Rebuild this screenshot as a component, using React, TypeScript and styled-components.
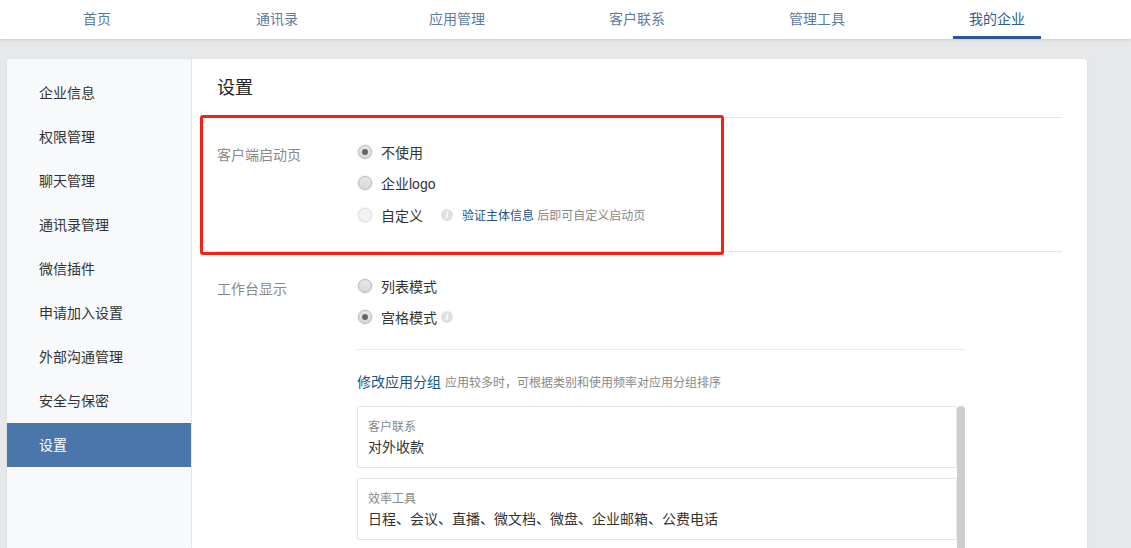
import styled, { createGlobalStyle } from 'styled-components';

const GlobalStyle = createGlobalStyle`
  html, body {
    margin: 0;
    padding: 0;
    height: 548px;
    overflow: hidden;
    background: #e7e8ea;
    font-family: "Liberation Sans", "Noto Sans CJK SC", sans-serif;
  }
`;

const Page = styled.div`
  width: 1131px;
  height: 548px;
  overflow: hidden;
  display: flex;
  flex-direction: column;
`;

const TopNav = styled.nav`
  flex: none;
  height: 39px;
  background: #fff;
  box-shadow: 0 1px 3px rgba(0, 0, 0, 0.14);
  display: flex;
  padding-left: 7px;
`;

const NavTab = styled.a<{ $active?: boolean }>`
  position: relative;
  width: 180px;
  height: 39px;
  text-align: center;
  font-size: 14px;
  line-height: 39px;
  color: ${(props) => (props.$active ? '#2f5c94' : '#5b7c9f')};

  &::after {
    content: '';
    display: ${(props) => (props.$active ? 'block' : 'none')};
    position: absolute;
    left: 46px;
    bottom: 0;
    width: 88px;
    height: 3px;
    background: #2b5a8e;
  }
`;

const Card = styled.div`
  position: relative;
  margin: 20px 0 0 7px;
  width: 1080px;
  flex: 1;
  display: flex;
  background: #fff;
  border-radius: 4px 4px 0 0;
  overflow: hidden;
  box-shadow: 0 1px 3px rgba(0, 0, 0, 0.08);
`;

const Sidebar = styled.aside`
  flex: none;
  box-sizing: border-box;
  width: 185px;
  padding-top: 12px;
  background: #f8f9fb;
  border-right: 1px dotted #d2d4d8;
`;

const SideItem = styled.div<{ $active?: boolean }>`
  height: 44px;
  line-height: 44px;
  padding-left: 32px;
  font-size: 14px;
  color: ${(props) => (props.$active ? '#fff' : '#333')};
  background: ${(props) => (props.$active ? '#4a76ab' : 'transparent')};
`;

const Main = styled.main`
  flex: 1;
  padding: 0 25px 0 24px;
`;

const Title = styled.h1`
  margin: 0;
  height: 59px;
  padding-left: 1px;
  box-sizing: border-box;
  line-height: 58px;
  font-size: 18px;
  font-weight: 400;
  color: #222;
  border-bottom: 1px solid #e4e5e7;
`;

const Section = styled.section<{ $border?: boolean }>`
  display: flex;
  box-sizing: border-box;
  padding-top: 18px;
  border-bottom: ${(props) => (props.$border ? '1px solid #e4e5e7' : 'none')};
  height: ${(props) => (props.$border ? '134px' : 'auto')};
`;

const FieldLabel = styled.div`
  flex: none;
  box-sizing: border-box;
  width: 141px;
  padding: 9px 0 0 1px;
  font-size: 14px;
  line-height: 20px;
  color: #888;
`;

const Options = styled.div`
  flex: none;
  width: 608px;
`;

const OptionRow = styled.div`
  display: flex;
  align-items: center;
  height: 31.5px;
  font-size: 14px;
  color: #333;
`;

const Radio = styled.span<{ $checked?: boolean; $disabled?: boolean }>`
  flex: none;
  position: relative;
  box-sizing: border-box;
  width: 14px;
  height: 14px;
  margin-left: 1px;
  margin-right: 9px;
  border-radius: 50%;
  border: 1px solid ${(props) => (props.$disabled ? '#e2e2e2' : '#b8b8b8')};
  background: ${(props) => (props.$disabled ? '#f3f3f3' : 'linear-gradient(#e8e8e8, #d8d8d8)')};
  box-shadow: 0 0 2px rgba(0, 0, 0, 0.18);

  &::after {
    content: '';
    display: ${(props) => (props.$checked ? 'block' : 'none')};
    position: absolute;
    left: 3px;
    top: 3px;
    width: 6px;
    height: 6px;
    border-radius: 50%;
    background: #666;
  }
`;

const Info = styled.span<{ $gap: number }>`
  flex: none;
  width: 12px;
  height: 12px;
  margin-left: ${(props) => props.$gap}px;
  border-radius: 50%;
  background: #e0e0e0;
  color: #fff;
  font-family: "Liberation Serif", serif;
  font-size: 10px;
  font-weight: 700;
  font-style: italic;
  line-height: 12px;
  text-align: center;
`;

const Hint = styled.span`
  margin-left: 9px;
  font-size: 12px;
  color: #888;
`;

const BlueLink = styled.a<{ $size: number }>`
  font-size: ${(props) => props.$size}px;
  color: #1d5488;
`;

const Divider = styled.hr`
  margin: 16px 0 0;
  border: 0;
  height: 1px;
  background: #e8e8e8;
`;

const GroupHeader = styled.div`
  margin-top: 22px;
  height: 20px;
  line-height: 20px;
  font-size: 12px;
  color: #888;

  ${BlueLink} {
    margin-right: 4px;
  }
`;

const GroupScroller = styled.div`
  position: relative;
  margin-top: 14px;
  padding-right: 8px;
`;

const ScrollThumb = styled.div`
  position: absolute;
  top: 0;
  right: 0;
  width: 8px;
  height: 160px;
  border-radius: 4px 4px 0 0;
  background: #cdcdcd;
`;

const GroupBox = styled.div`
  box-sizing: border-box;
  height: 62px;
  margin-bottom: 10px;
  padding: 11px 10px 0;
  border: 1px solid #e6e6e6;
  border-radius: 2px;
`;

const GroupName = styled.div`
  font-size: 12px;
  line-height: 18px;
  color: #888;
`;

const GroupApps = styled.div`
  margin-top: 1px;
  font-size: 14px;
  line-height: 20px;
  color: #333;
`;

const Callout = styled.div`
  position: absolute;
  left: 193px;
  top: 56px;
  width: 524px;
  height: 140px;
  box-sizing: border-box;
  border: 3px solid #fa1e14;
  border-radius: 3px;
`;

const menu = ['企业信息', '权限管理', '聊天管理', '通讯录管理', '微信插件', '申请加入设置', '外部沟通管理', '安全与保密', '设置'];
const tabs = ['首页', '通讯录', '应用管理', '客户联系', '管理工具', '我的企业'];

const App = () => {
  return (
    <Page>
      <GlobalStyle />
      <TopNav>
        {tabs.map((tab) => (
          <NavTab key={tab} $active={tab === '我的企业'}>{tab}</NavTab>
        ))}
      </TopNav>
      <Card>
        <Sidebar>
          {menu.map((item) => (
            <SideItem key={item} $active={item === '设置'}>{item}</SideItem>
          ))}
        </Sidebar>
        <Main>
          <Title>设置</Title>
          <Section $border>
            <FieldLabel>客户端启动页</FieldLabel>
            <Options>
              <OptionRow><Radio $checked />不使用</OptionRow>
              <OptionRow><Radio />企业logo</OptionRow>
              <OptionRow>
                <Radio $disabled />自定义
                <Info $gap={18}>i</Info>
                <Hint><BlueLink $size={12}>验证主体信息</BlueLink> 后即可自定义启动页</Hint>
              </OptionRow>
            </Options>
          </Section>
          <Section>
            <FieldLabel>工作台显示</FieldLabel>
            <Options>
              <OptionRow><Radio />列表模式</OptionRow>
              <OptionRow><Radio $checked />宫格模式<Info $gap={4}>i</Info></OptionRow>
              <Divider />
              <GroupHeader>
                <BlueLink $size={14}>修改应用分组</BlueLink>
                应用较多时，可根据类别和使用频率对应用分组排序
              </GroupHeader>
              <GroupScroller>
                <ScrollThumb />
                <GroupBox>
                  <GroupName>客户联系</GroupName>
                  <GroupApps>对外收款</GroupApps>
                </GroupBox>
                <GroupBox>
                  <GroupName>效率工具</GroupName>
                  <GroupApps>日程、会议、直播、微文档、微盘、企业邮箱、公费电话</GroupApps>
                </GroupBox>
              </GroupScroller>
            </Options>
          </Section>
        </Main>
        <Callout />
      </Card>
    </Page>
  );
};

export default App;
